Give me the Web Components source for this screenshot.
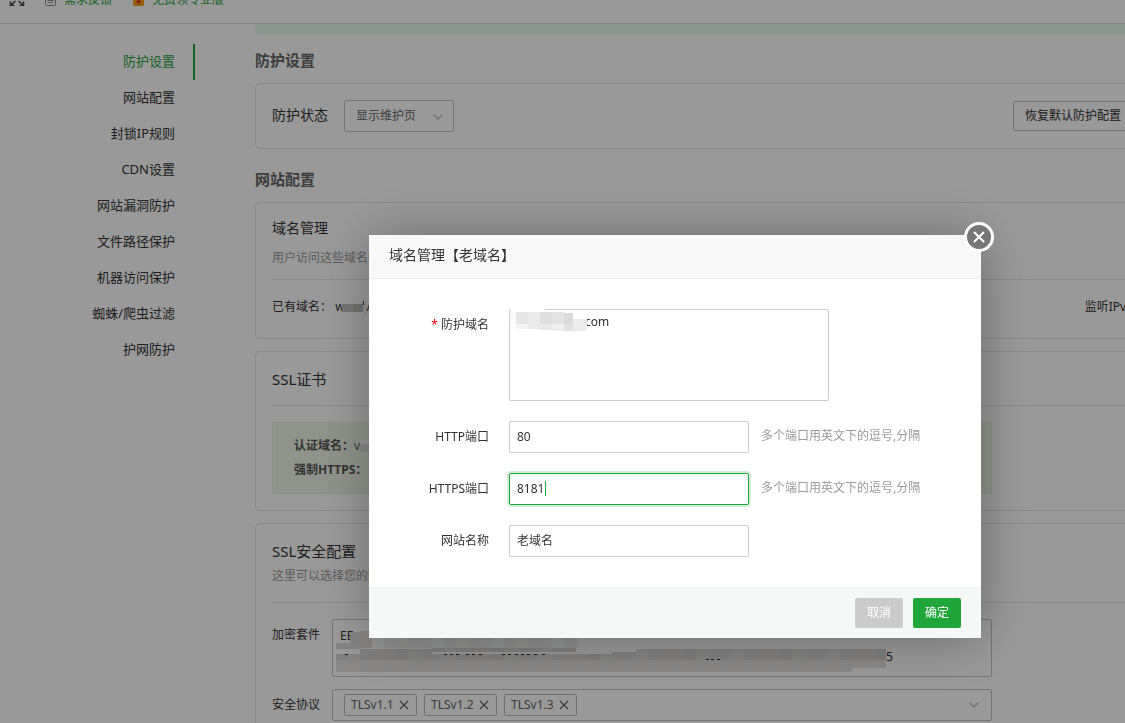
<!DOCTYPE html>
<html lang="zh-CN">
<head>
<meta charset="utf-8">
<title>防护设置</title>
<style>
    html, body { height: 100%; }
    body {
        margin: 0;
        overflow: hidden;
        background: #fff;
        color: #333;
        font: 12px/20px "Noto Sans", "Noto Sans CJK SC", sans-serif;
    }
</style>
</head>
<body>
<waf-page>
    <top-bar slot="top"></top-bar>
    <side-nav slot="side">
        <nav-item active>防护设置</nav-item>
        <nav-item>网站配置</nav-item>
        <nav-item>封锁IP规则</nav-item>
        <nav-item>CDN设置</nav-item>
        <nav-item>网站漏洞防护</nav-item>
        <nav-item>文件路径保护</nav-item>
        <nav-item>机器访问保护</nav-item>
        <nav-item>蜘蛛/爬虫过滤</nav-item>
        <nav-item>护网防护</nav-item>
    </side-nav>
    <section-title>防护设置</section-title>
    <status-card></status-card>
    <section-title>网站配置</section-title>
    <domain-card></domain-card>
    <cert-card></cert-card>
    <ssl-card></ssl-card>
</waf-page>
<layer-dialog heading="域名管理【老域名】">
    <form-row label="防护域名" type="textarea" value="com" required>
        <pixel-mask name="domain"></pixel-mask>
    </form-row>
    <form-row label="HTTP端口" value="80" hint="多个端口用英文下的逗号,分隔"></form-row>
    <form-row label="HTTPS端口" value="8181" hint="多个端口用英文下的逗号,分隔" active></form-row>
    <form-row label="网站名称" value="老域名"></form-row>
</layer-dialog>

<script>
const chevron = `<svg class="chevron" width="12" height="8" viewBox="0 0 12 8" fill="none" stroke="#c0c0c0" stroke-width="1.3"><path d="M1.5 1.5L6 6l4.5-4.5"/></svg>`;

const cardStyle = `
    :host { display: block; box-sizing: border-box; margin-bottom: 12px; padding: 15px 16px 16px; border: 1px solid #e4e4e4; border-radius: 4px; }
    h3 { margin: 0; font-weight: 400; font-size: 15px; line-height: 24px; color: #333; }
    p { margin: 0; color: #999; }
    hr { margin: 14px 0 16px; border: 0; border-top: 1px solid #e4e4e4; }
`;

class WafPage extends HTMLElement {
    constructor() {
        super();
        this.attachShadow({ mode: 'open' }).innerHTML = `
            <style>
                :host { display: block; height: 100vh; overflow: hidden; }
                .body { display: flex; }
                main { flex: 1; min-width: 0; margin: 0 -25px 0 60px; }
                .notice { height: 10px; margin-bottom: 8px; background: #e5f9ea; border-radius: 0 0 4px 4px; }
            </style>
            <slot name="top"></slot>
            <div class="body">
                <slot name="side"></slot>
                <main>
                    <div class="notice"></div>
                    <slot></slot>
                </main>
            </div>
        `;
    }
}

class TopBar extends HTMLElement {
    constructor() {
        super();
        this.attachShadow({ mode: 'open' }).innerHTML = `
            <style>
                :host { display: flex; align-items: center; height: 47px; margin-top: -24px; padding-left: 9px; border-bottom: 1px solid #dcdcdc; }
                a { display: flex; align-items: center; gap: 7px; color: #20a53a; text-decoration: none; }
                .feedback { margin: 0 19px 0 19px; }
            </style>
            <svg width="16" height="12" viewBox="0 0 16 12" fill="none" stroke="#444" stroke-width="1.6"><path d="M9.500 7l4.500 4M6.500 7L2 11M9.500 5L14 1M6.500 5L2 1M1.500 7.500v4h4M14.500 7.500v4h-4M1.500 4V.5h4M14.500 4V.5h-4"/></svg>
            <a class="feedback" href="#">
                <svg width="13" height="13" viewBox="0 0 13 13" fill="none" stroke="#888"><rect x="1.500" y=".5" width="10" height="12" rx="1"/><path d="M3.500 4.500h6M3.500 7.500h6M3.500 9.500h6"/></svg>
                需求反馈
            </a>
            <a href="#">
                <svg width="14" height="13" viewBox="0 0 14 13"><rect x="2" y="0" width="11" height="13" rx="1" fill="#f5a21b"/><path d="M7.500 11L5 8.500l1.500-1V3h2v4.500l1.500 1z" fill="#d93030"/></svg>
                免费领专业版
            </a>
        `;
    }
}

class SideNav extends HTMLElement {
    constructor() {
        super();
        this.attachShadow({ mode: 'open' }).innerHTML = `
            <style>
                :host { display: block; width: 195px; flex: none; }
                nav { padding-top: 20px; }
            </style>
            <nav><slot></slot></nav>
        `;
    }
}

class NavItem extends HTMLElement {
    constructor() {
        super();
        this.attachShadow({ mode: 'open' }).innerHTML = `
            <style>
                :host { display: block; }
                a { display: block; padding: 0 18px 2px 0; border-right: 2px solid transparent; font-size: 13px; line-height: 34px; text-align: right; color: #333; text-decoration: none; }
                :host([active]) a { color: #20a53a; border-color: #20a53a; }
            </style>
            <a href="#"><slot></slot></a>
        `;
    }
}

class SectionTitle extends HTMLElement {
    constructor() {
        super();
        this.attachShadow({ mode: 'open' }).innerHTML = `
            <style>
                :host { display: block; padding: 8px 0 13px; }
                h2 { margin: 0; font-size: 15px; line-height: 20px; font-weight: 700; color: #666; }
            </style>
            <h2><slot></slot></h2>
        `;
    }
}

class StatusCard extends HTMLElement {
    constructor() {
        super();
        this.attachShadow({ mode: 'open' }).innerHTML = `
            <style>
                ${cardStyle}
                :host { padding: 16px; }
                .row { display: flex; align-items: center; gap: 16px; }
                label { padding-bottom: 2px; font-size: 14px; color: #333; }
                .select { position: relative; width: 110px; }
                select { appearance: none; display: block; width: 100%; height: 32px; padding: 0 11px; border: 1px solid #c4c4c4; border-radius: 2px; background: #fff; font: inherit; color: #666; }
                .chevron { position: absolute; right: 10px; top: 13px; pointer-events: none; }
                button { height: 30px; margin-left: auto; padding: 0 11px; border: 1px solid #bfbfbf; border-radius: 2px; background: #fff; font: inherit; color: #333; }
            </style>
            <div class="row">
                <label for="status">防护状态</label>
                <div class="select">
                    <select id="status"><option>显示维护页</option></select>
                    ${chevron}
                </div>
                <button>恢复默认防护配置</button>
            </div>
        `;
    }
}

class DomainCard extends HTMLElement {
    constructor() {
        super();
        this.attachShadow({ mode: 'open' }).innerHTML = `
            <style>
                ${cardStyle}
                h3 { font-size: 14px; line-height: 20px; }
                p { margin-top: 10px; }
                hr { margin: 11px 0 17px; }
                .row { display: flex; padding-bottom: 5px; }
                .mask { margin-left: -3px; }
                .ipv6 { margin-left: auto; }
            </style>
            <h3>域名管理</h3>
            <p>用户访问这些域名时</p>
            <hr>
            <div class="row">
                <span>已有域名：</span>
                <span>&nbsp;w</span>
                <pixel-mask class="mask" name="site"></pixel-mask>
                <span>/</span>
                <span class="ipv6">监听IPv6</span>
            </div>
        `;
    }
}

class CertCard extends HTMLElement {
    constructor() {
        super();
        this.attachShadow({ mode: 'open' }).innerHTML = `
            <style>
                ${cardStyle}
                .info { box-sizing: border-box; max-width: 720px; padding: 11px 21px; border: 1px solid #e6efe6; background: #eff5e8; line-height: 24px; color: #555; }
                .line { display: flex; }
                b { flex: none; }
            </style>
            <h3>SSL证书</h3>
            <hr>
            <div class="info">
                <div class="line"><b>认证域名：</b><span>v</span><pixel-mask name="cert"></pixel-mask></div>
                <div class="line"><b>强制HTTPS：</b></div>
            </div>
        `;
    }
}

class SslCard extends HTMLElement {
    constructor() {
        super();
        const tags = ['TLSv1.1', 'TLSv1.2', 'TLSv1.3'].map(name => `
            <span class="tag">${name}
                <button aria-label="${name}"><svg width="10" height="10" viewBox="0 0 10 10" stroke="#666" stroke-width="1.2"><path d="M1 1l8 8M9 1L1 9"/></svg></button>
            </span>`).join('');
        this.attachShadow({ mode: 'open' }).innerHTML = `
            <style>
                ${cardStyle}
                p { margin-top: 3px; }
                hr { margin: 16px 0; }
                .field { display: flex; max-width: 720px; margin-bottom: 12px; }
                .name { flex: none; width: 60px; line-height: 32px; color: #333; }
                .box { position: relative; box-sizing: border-box; flex: 1; }
                textarea { display: block; box-sizing: border-box; width: 100%; height: 58px; padding: 6px 7px; border: 1px solid #c4c4c4; border-radius: 2px; resize: none; font: inherit; color: #333; background: #fff; }
                .protocols { display: flex; align-items: center; gap: 7px; height: 32px; padding: 0 11px; border: 1px solid #c4c4c4; border-radius: 2px; }
                .tag { display: flex; align-items: center; gap: 5px; box-sizing: border-box; width: 73px; height: 22px; padding: 0 6px; border: 1px solid #bbb; border-radius: 2px; color: #666; }
                .tag button { display: flex; padding: 0; border: 0; background: none; }
                .chevron { margin-left: auto; }
                pixel-mask { position: absolute; left: 0; top: 0; }
            </style>
            <h3>SSL安全配置</h3>
            <p>这里可以选择您的网站</p>
            <hr>
            <div class="field">
                <label class="name" for="ciphers">加密套件</label>
                <div class="box">
                    <textarea id="ciphers">EE</textarea>
                    <pixel-mask name="ciphers">5</pixel-mask>
                </div>
            </div>
            <div class="field">
                <span class="name">安全协议</span>
                <div class="box protocols">${tags}${chevron}</div>
            </div>
        `;
    }
}

// Blocks that hide private text: [x, y, width, height, colour]
const MASKS = {
    domain: {
        width: 84, height: 26,
        blocks: [
            [2, 0, 34, 3, '#fff'], [1, 3, 6, 14, '#fafafa'],
            [7, 3, 12, 12, '#e6e6e6'], [19, 3, 12, 12, '#ebebeb'], [31, 3, 12, 12, '#dedede'],
            [43, 3, 12, 12, '#e3e3e3'], [55, 4, 9, 12, '#dadada'], [64, 10, 14, 12, '#ececec'],
            [7, 15, 12, 5, '#f3f3f3'], [19, 15, 12, 5, '#eaeaea'], [31, 15, 12, 6, '#e8e8e8'],
            [43, 15, 12, 7, '#eee'], [55, 15, 9, 7, '#e1e1e1'],
        ],
    },
    site: {
        width: 25, height: 20,
        blocks: [[0, 7, 12, 8, '#c4c4c4'], [12, 7, 9, 8, '#bcbcb9'], [21, 7, 5, 12, '#f3f3f3'], [21, 4, 1, 4, '#444']],
    },
    cert: {
        width: 20, height: 24,
        blocks: [[0, 6, 9, 4, '#f7f7f7'], [0, 10, 9, 8, '#e3e3e3'], [9, 6, 11, 12, '#f2f2f2']],
    },
    ciphers: { width: 554, height: 56, blocks: cipherBlocks() },
};

function cipherBlocks() {
    const light = ['#f6f8f7', '#eee', '#f3f3f2', '#eceded', '#f0efef'];
    const tones = ['#e3e3e3', '#e6e6e5', '#dfe1e1', '#e5e3e1', '#dedede', '#e7e7e7', '#e0e2e2'];
    const darker = ['#d6d6d6', '#dadad8', '#d1d1d2', '#d8d6d4', '#d4d4d6', '#dcdcdc'];
    const blocks = [[4, 24, 15, 6, '#dedede'], [18, 13, 10, 17, '#dadbdc'], [28, 12, 12, 17, '#e0dcd9']];
    for (let x = 40, i = 0; x < 246; x += 12, i++) {
        blocks.push([x, 17, Math.min(12, 247 - x), 12, light[i % 5]]);
    }
    for (let x = 4, i = 0; x < 554; x += 12, i++) {
        const fill = darker[(i * 5 + (i >> 2)) % 6];
        const gap = x > 90 && x < 270;
        // the two strokes part in the middle and leave a thin light line
        if (gap && x < 236) blocks.push([x, 29, 12, 4, fill]);
        const top = gap || x < 20 ? 35 : x < 300 && x > 100 ? 33 : 30;
        blocks.push([x, top, 12, 41 - top, fill]);
        blocks.push([x, 41, 12, x > 510 ? 8 : 12, tones[(i * 3 + (i >> 1)) % 7]]);
    }
    // slivers of the covered second line
    for (const x of [13, 112, 118, 124, 134, 140, 147, 170, 176, 183, 189, 195, 202, 210, 374, 379, 385]) {
        blocks.push([x, x > 300 ? 40 : 35, 3, 1, '#222']);
    }
    return blocks;
}

class PixelMask extends HTMLElement {
    constructor() {
        super();
        this.attachShadow({ mode: 'open' });
    }

    connectedCallback() {
        const { width, height, blocks } = MASKS[this.getAttribute('name')];
        const rects = blocks.map(([x, y, w, h, fill]) => `<rect x="${x}" y="${y}" width="${w}" height="${h}" fill="${fill}"/>`).join('');
        this.shadowRoot.innerHTML = `
            <style>
                :host { display: flex; align-items: flex-end; pointer-events: none; }
                :host([name="site"]), :host([name="cert"]) { align-items: flex-start; }
                :host([name="ciphers"]) { padding-bottom: 8px; }
                :host([name="ciphers"]) svg { margin-bottom: -8px; }
                svg { display: block; flex: none; }
            </style>
            <svg width="${width}" height="${height}" shape-rendering="crispEdges" aria-hidden="true">${rects}</svg>
            <slot></slot>
        `;
    }
}

class LayerDialog extends HTMLElement {
    constructor() {
        super();
        this.attachShadow({ mode: 'open' }).innerHTML = `
            <style>
                :host { position: fixed; inset: 0; display: flex; justify-content: center; align-items: flex-start; padding: 235px 0 0 225px; background: rgba(0, 0, 0, .4); }
                section { position: relative; width: 612px; background: #fff; box-shadow: 1px 1px 50px rgba(0, 0, 0, .3); }
                header { padding: 0 20px 3px; border-bottom: 1px solid #eee; background: #f8f8f8; }
                h2 { margin: 0; font-size: 14px; line-height: 40px; font-weight: 400; color: #333; }
                .close { position: absolute; right: -13px; top: -13px; display: flex; align-items: center; justify-content: center; width: 30px; height: 30px; padding: 0; border: 3px solid #fff; border-radius: 50%; background: #777; }
                form { display: grid; gap: 20px; padding: 30px 0; }
                footer { display: flex; justify-content: flex-end; gap: 10px; padding: 10px 20px; border-top: 1px solid #edf1f2; background: #f6f8f8; }
                footer button { width: 48px; height: 30px; padding: 0; border: 0; border-radius: 2px; background: #cbcbcb; color: #fff; font: inherit; }
                footer .ok { background: #20a53a; }
            </style>
            <section role="dialog" aria-labelledby="title">
                <header><h2 id="title"></h2></header>
                <button class="close" aria-label="关闭"><svg width="12" height="12" viewBox="0 0 12 12" stroke="#fff" stroke-width="2" stroke-linecap="round"><path d="M1.500 1.500l9 9M10.500 1.500l-9 9"/></svg></button>
                <form><slot></slot></form>
                <footer><button>取消</button><button class="ok">确定</button></footer>
            </section>
        `;
    }

    connectedCallback() {
        this.shadowRoot.querySelector('h2').textContent = this.getAttribute('heading');
    }
}

class FormRow extends HTMLElement {
    constructor() {
        super();
        this.attachShadow({ mode: 'open' });
    }

    connectedCallback() {
        const value = this.getAttribute('value');
        const control = this.getAttribute('type') === 'textarea'
            ? `<textarea id="field">${value}</textarea>`
            : `<input id="field" type="text" value="${value}">`;
        this.shadowRoot.innerHTML = `
            <style>
                :host { display: flex; align-items: flex-start; line-height: 32px; }
                label { width: 120px; margin-right: 20px; text-align: right; color: #333; }
                i { margin-right: 3px; font-style: normal; color: #f00; }
                .control { position: relative; }
                input, textarea { display: block; box-sizing: border-box; width: 240px; height: 32px; padding: 0 7px; border: 1px solid #ccc; border-radius: 2px; outline: 0; background: #fff; font: inherit; color: #333; }
                textarea { width: 320px; height: 92px; padding-top: 2px; line-height: 20px; text-indent: 68px; resize: none; }
                :host([active]) input {
                    border-color: #20a53a;
                    box-shadow: 0 0 0 2px rgba(32, 165, 58, .2);
                    background: linear-gradient(#20a53a, #20a53a) 35px 7px / 1px 15px no-repeat #fff;
                }
                ::slotted(pixel-mask) { position: absolute; left: 0; top: 0; }
                .hint { margin-left: 12px; line-height: 30px; color: #999; }
            </style>
            <label for="field">${this.hasAttribute('required') ? '<i>*</i>' : ''}${this.getAttribute('label')}</label>
            <div class="control">${control}<slot></slot></div>
            <span class="hint">${this.getAttribute('hint') || ''}</span>
        `;
    }
}

customElements.define('pixel-mask', PixelMask);
customElements.define('waf-page', WafPage);
customElements.define('top-bar', TopBar);
customElements.define('side-nav', SideNav);
customElements.define('nav-item', NavItem);
customElements.define('section-title', SectionTitle);
customElements.define('status-card', StatusCard);
customElements.define('domain-card', DomainCard);
customElements.define('cert-card', CertCard);
customElements.define('ssl-card', SslCard);
customElements.define('layer-dialog', LayerDialog);
customElements.define('form-row', FormRow);
</script>
</body>
</html>
